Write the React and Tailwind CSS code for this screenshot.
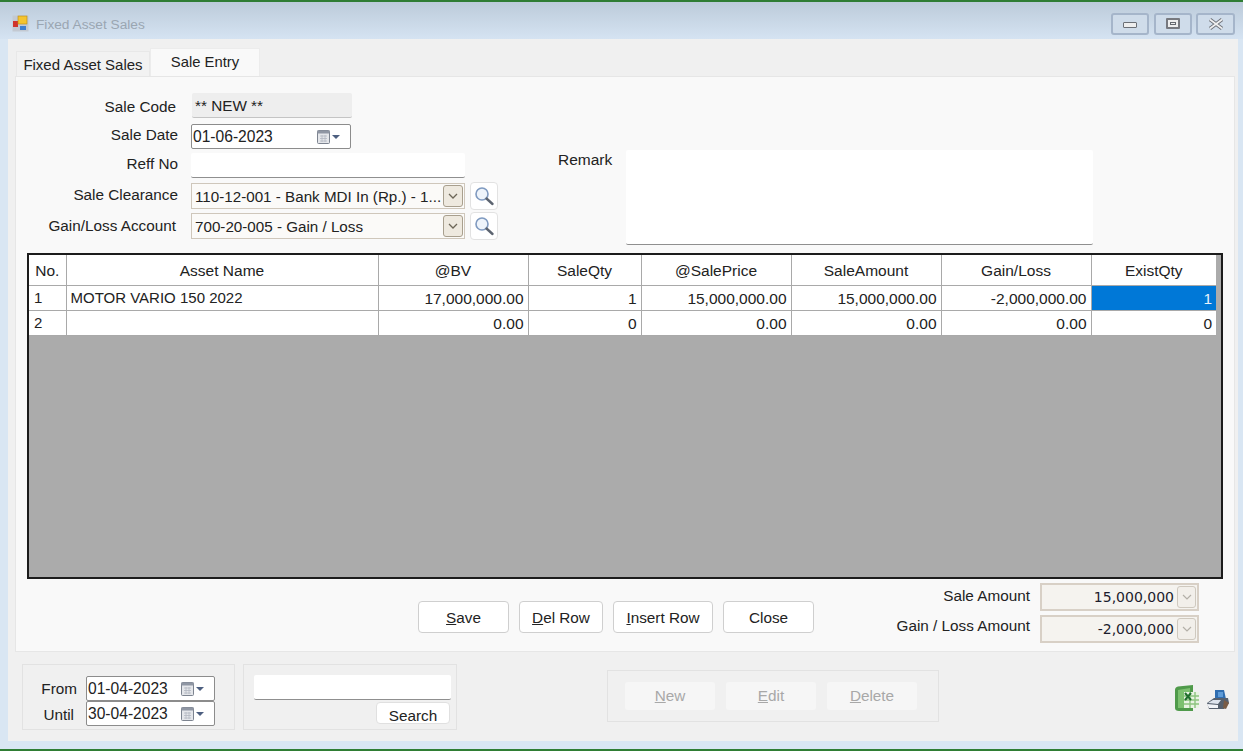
import React from "react";

const columns = [
  { name: "No.", w: "w-[37px]" },
  { name: "Asset Name", w: "w-[312px]" },
  { name: "@BV", w: "w-[150px]" },
  { name: "SaleQty", w: "w-[113px]" },
  { name: "@SalePrice", w: "w-[150px]" },
  { name: "SaleAmount", w: "w-[150px]" },
  { name: "Gain/Loss", w: "w-[150px]" },
  { name: "ExistQty", w: "w-[125px]" },
];

const rows = [
  ["1", "MOTOR VARIO 150 2022", "17,000,000.00", "1", "15,000,000.00", "15,000,000.00", "-2,000,000.00", "1"],
  ["2", "", "0.00", "0", "0.00", "0.00", "0.00", "0"],
];

const CalendarIcon = () => (
  <svg width="26" height="16" viewBox="0 0 26 16" className="shrink-0">
    <rect x="1.5" y="1.5" width="12" height="13" rx="1" fill="#e4e6ea" stroke="#7d8490" />
    <rect x="1.5" y="1.5" width="12" height="3" fill="#8f96a3" />
    <path d="M4 7h7M4 9.5h7M4 12h7M6 6v7M9 6v7" stroke="#b3b8c1" strokeWidth="0.8" />
    <path d="M16 6h8l-4 4z" fill="#4d5f80" />
  </svg>
);

const SearchButton = () => (
  <button className="w-[28px] h-[28px] ml-[5px] bg-white border border-[#e2e2e2] rounded-[4px] flex items-center justify-center">
    <svg width="22" height="22" viewBox="0 0 22 22">
      <circle cx="9" cy="9" r="6" fill="#eef4fb" stroke="#7f9ac0" strokeWidth="1.6" />
      <path d="M13.5 13.5l6 5.5" stroke="#5c6470" strokeWidth="2.4" strokeLinecap="round" />
    </svg>
  </button>
);

const Combo = ({ text }) => (
  <div className="w-[274px] h-[26px] bg-[#fbfaf8] border border-[#cfc7bb] flex items-center pl-[3px] pr-[1px]">
    <span className="flex-1 text-[15.2px] pt-[2px] whitespace-nowrap overflow-hidden">{text}</span>
    <span className="w-[20px] h-[22px] bg-[#eee9df] border border-[#a89f8e] rounded-[3px] flex items-center justify-center">
      <svg width="10" height="7" viewBox="0 0 10 7">
        <path d="M1 1l4 4 4-4" fill="none" stroke="#6d6658" strokeWidth="1.3" />
      </svg>
    </span>
  </div>
);

const FormRow = ({ label, labelClass, className, children }) => (
  <div className={`flex items-center ${className}`}>
    <span className={`w-[162px] text-right whitespace-nowrap ${labelClass || ""}`}>{label}</span>
    <div className="ml-[13px] flex items-center">{children}</div>
  </div>
);

const DateBox = ({ value, className }) => (
  <div className={`w-[129px] h-[25px] bg-white border border-[#8c8c8c] rounded-[2px] flex items-center pl-[1px] pr-[8px] justify-between ${className || ""}`}>
    <span className="text-[15.6px] pt-[1px]">{value}</span>
    <CalendarIcon />
  </div>
);

const ActionButton = ({ w, children }) => (
  <button className={`${w} h-[32px] pt-[2px] bg-white border border-[#cfcfcf] rounded-[4px] text-[#222] whitespace-nowrap`}>
    {children}
  </button>
);

const AmountBox = ({ value }) => (
  <div className="w-[159px] h-[28px] bg-[#f5f3ef] border-2 border-[#d8d0c6] flex items-center justify-end pr-[1px]">
    <span className="text-[14px] text-[#1c1c2c] font-['DejaVu_Sans',sans-serif] mr-[3px] pt-[1px]">{value}</span>
    <span className="w-[19px] h-[22px] bg-[#f2efea] border border-[#cfc9bf] rounded-[3px] flex items-center justify-center">
      <svg width="10" height="7" viewBox="0 0 10 7">
        <path d="M1 1l4 4 4-4" fill="none" stroke="#b4b0a8" strokeWidth="1.2" />
      </svg>
    </span>
  </div>
);

const DisabledButton = ({ children }) => (
  <button className="w-[90px] h-[28px] pt-[1px] bg-[#f6f6f6] rounded-[3px] text-[#a8a8a8]">{children}</button>
);

export default function App() {
  return (
    <div className="w-[1243px] h-[751px] overflow-hidden flex flex-col bg-[#d9e6f3] border-t-2 border-b-2 border-[#2f7d34] font-['Liberation_Sans',sans-serif] text-[15.3px] text-[#222]">
      {/* Title bar */}
      <div className="h-[37px] shrink-0 flex items-center pt-[6px] pl-[12px] pr-[8px] bg-gradient-to-b from-[#bccbda] to-[#d5e3f2]">
        <svg width="17" height="17" viewBox="0 0 17 17" className="shrink-0">
          <rect x="0.5" y="0.5" width="16" height="16" fill="#c3c9d2" />
          <rect x="1" y="6" width="5" height="6" fill="#d0342c" />
          <rect x="6" y="1" width="9" height="8" fill="#f4c430" stroke="#b98a12" strokeWidth="0.6" />
          <rect x="8" y="11" width="6" height="4" fill="#3d7fd1" />
        </svg>
        <span className="ml-[7px] pt-[3px] text-[13.7px] text-[#9aa6b2]">Fixed Asset Sales</span>
        <div className="ml-auto flex">
          <div className="w-[38px] h-[22px] border-2 border-[#a5b5ca] rounded-[3px] bg-[#cfdcea] flex items-center justify-center">
            <div className="w-[14px] h-[6px] mt-[3px] bg-[#eeeeee] border border-[#6b6f76] rounded-[1px]"></div>
          </div>
          <div className="w-[38px] h-[22px] ml-[5px] border-2 border-[#a5b5ca] rounded-[3px] bg-[#cfdcea] flex items-center justify-center">
            <div className="w-[14px] h-[11px] bg-[#eeeeee] border-2 border-[#77797f] rounded-[1px] flex items-center justify-center">
              <div className="w-[6px] h-[3px] border border-[#66696f]"></div>
            </div>
          </div>
          <div className="w-[39px] h-[22px] ml-[4px] border-2 border-[#a5b5ca] rounded-[3px] bg-[#cfdcea] flex items-center justify-center">
            <svg width="16" height="12" viewBox="0 0 16 12">
              <path d="M2 1.5l12 9M14 1.5l-12 9" stroke="#70747b" strokeWidth="3.6" />
              <path d="M2 1.5l12 9M14 1.5l-12 9" stroke="#f0f0f0" strokeWidth="1.6" />
            </svg>
          </div>
        </div>
      </div>

      {/* Window body */}
      <div className="h-[702px] shrink-0 ml-[8px] mr-[5px] bg-[#f0f0f0] flex flex-col">
        {/* Tabs */}
        <div className="h-[37px] shrink-0 flex items-end pl-[8px]">
          <div className="w-[134px] h-[25px] bg-[#f2f2f2] border border-b-0 border-[#e8e8e8] text-center text-[15px] leading-[25px]">Fixed Asset Sales</div>
          <div className="w-[110px] h-[28px] bg-[#f9f9f9] border border-b-0 border-[#ececec] text-center text-[14.8px] leading-[27px] pb-[3px]">Sale Entry</div>
        </div>

        {/* Tab page */}
        <div className="h-[576px] shrink-0 ml-[7px] mr-[3px] bg-[#f9f9f9] border border-[#e6e6e6] flex flex-col">
          <div className="h-[176px] shrink-0 flex">
            <div className="flex flex-col pt-[16px]">
              <FormRow label="Sale Code" labelClass="pr-[2px] pt-[3px]" className="h-[25px]">
                <div className="w-[160px] h-[25px] ml-[1px] bg-[#eeeeee] rounded-[2px] border-b border-[#c4c4c4] pl-[3px] leading-[26px]">** NEW **</div>
              </FormRow>
              <FormRow label="Sale Date" labelClass="pb-[2px]" className="h-[25px] mt-[6px]">
                <DateBox value="01-06-2023" className="!w-[160px]" />
              </FormRow>
              <FormRow label="Reff No" labelClass="pb-[3px]" className="h-[25px] mt-[4px]">
                <div className="w-[274px] h-[25px] bg-white border-b border-[#8f8f8f] rounded-[2px]"></div>
              </FormRow>
              <FormRow label="Sale Clearance" labelClass="pb-[2px]" className="h-[26px] mt-[5px]">
                <Combo text="110-12-001 - Bank MDI In (Rp.) - 1..." />
                <SearchButton />
              </FormRow>
              <FormRow label="Gain/Loss Account" labelClass="pr-[2px]" className="h-[26px] mt-[4px]">
                <Combo text="700-20-005 - Gain / Loss" />
                <SearchButton />
              </FormRow>
            </div>
            <span className="ml-[60px] mt-[74px] h-[18px] leading-[18px] text-[15.5px]">Remark</span>
            <div className="ml-[14px] mt-[73px] w-[467px] h-[95px] bg-white border-b border-[#8f8f8f] rounded-[2px]"></div>
          </div>

          {/* Data grid */}
          <div className="ml-[11px] w-[1196px] h-[326px] shrink-0 bg-[#ababab] border-2 border-[#1c1c1c]">
            <table className="table-fixed border-collapse bg-white text-[15.5px] w-[1187px]">
              <thead>
                <tr className="h-[30px]">
                  {columns.map((col) => (
                    <th key={col.name} className={`${col.w} font-normal text-center pt-[2px] border-r border-b border-[#a9a9a9] last:border-r-0 p-0`}>
                      {col.name}
                    </th>
                  ))}
                </tr>
              </thead>
              <tbody>
                {rows.map((row, r) => (
                  <tr key={r} className="h-[25px]">
                    {row.map((cell, c) => (
                      <td
                        key={c}
                        className={`border-r border-b border-[#a9a9a9] last:border-r-0 p-0 pt-[1px] whitespace-nowrap ${c < 2 ? "text-left text-[15px]" : "text-right"} ${c === 0 ? "pl-[5px]" : c === 1 ? "pl-[4px]" : "pr-[4px]"} ${r === 0 && c === 7 ? "bg-[#0078d7] text-[#e8f2fb]" : ""}`}
                      >
                        {cell}
                      </td>
                    ))}
                  </tr>
                ))}
              </tbody>
            </table>
          </div>

          {/* Buttons and totals */}
          <div className="flex items-start flex-1">
            <div className="ml-[402px] mt-[22px] flex gap-[10px]">
              <ActionButton w="w-[91px]"><u>S</u>ave</ActionButton>
              <ActionButton w="w-[84px]"><u>D</u>el Row</ActionButton>
              <ActionButton w="w-[100px]"><u>I</u>nsert Row</ActionButton>
              <ActionButton w="w-[91px]">Close</ActionButton>
            </div>
            <div className="ml-[auto] mr-[35px] mt-[4px] flex flex-col gap-[4px]">
              <div className="flex items-start justify-end">
                <span className="mr-[10px] mt-[2px]">Sale Amount</span>
                <AmountBox value="15,000,000" />
              </div>
              <div className="flex items-start justify-end">
                <span className="mr-[10px] mt-[0px]">Gain / Loss Amount</span>
                <AmountBox value="-2,000,000" />
              </div>
            </div>
          </div>
        </div>

        {/* Footer */}
        <div className="flex items-start pl-[14px] pt-[12px]">
          <div className="w-[213px] h-[66px] border border-[#e2e2e2] flex flex-col pt-[11px] pl-[18px]">
            <div className="flex items-center h-[25px]">
              <span className="w-[36px] text-right pt-[1px]">From</span>
              <DateBox value="01-04-2023" className="ml-[9px]" />
            </div>
            <div className="flex items-center h-[25px]">
              <span className="w-[33px] text-right pt-[3px]">Until</span>
              <DateBox value="30-04-2023" className="ml-[12px]" />
            </div>
          </div>
          <div className="w-[214px] h-[66px] ml-[8px] border border-[#e2e2e2] flex flex-col items-end pt-[10px] pr-[5px]">
            <div className="w-[197px] h-[25px] bg-white border-b border-[#8f8f8f] rounded-[2px]"></div>
            <button className="w-[74px] h-[22px] mt-[2px] mr-[1px] bg-white border border-[#e0e0e0] rounded-[4px] leading-[26px]">Search</button>
          </div>
          <div className="w-[332px] h-[52px] ml-[150px] mt-[6px] border border-[#e2e2e2] flex items-center gap-[11px] pl-[17px]">
            <DisabledButton><u>N</u>ew</DisabledButton>
            <DisabledButton><u>E</u>dit</DisabledButton>
            <DisabledButton><u>D</u>elete</DisabledButton>
          </div>
          <svg width="26" height="27" viewBox="0 0 26 27" className="ml-[235px] mt-[21px] shrink-0">
            <path d="M1 5q0-3 3-3.5L19 0v26L5 26q-4 0-4-3z" fill="#4f9a4a" />
            <path d="M4 5l12-2v20H4z" fill="#7cc06f" />
            <rect x="10" y="7" width="15" height="16" fill="#e8f3e2" />
            <path d="M10 11h15M10 15h15M10 19h15M16 7v16M21 7v16" stroke="#8cc47f" strokeWidth="1.4" />
            <path d="M11 8l6 7M17 8l-6 7" stroke="#1f6e2c" strokeWidth="2" />
          </svg>
          <svg width="24" height="21" viewBox="0 0 24 21" className="ml-[6px] mt-[25px] shrink-0">
            <path d="M9 1h9l2 9H9z" fill="#2f6db0" />
            <path d="M12 3h5v5h-5z" fill="#5d9bd8" />
            <path d="M1 14l7-5h14l1 5-5 6H3z" fill="#56606e" />
            <path d="M2 14l5-3h8l-3 4z" fill="#dfe5ee" />
            <path d="M1 15l11 1v3H3z" fill="#f2f4f8" />
            <path d="M18 11l5 3-3 6-3-1z" fill="#7a5c46" />
          </svg>
        </div>
      </div>
    </div>
  );
}
